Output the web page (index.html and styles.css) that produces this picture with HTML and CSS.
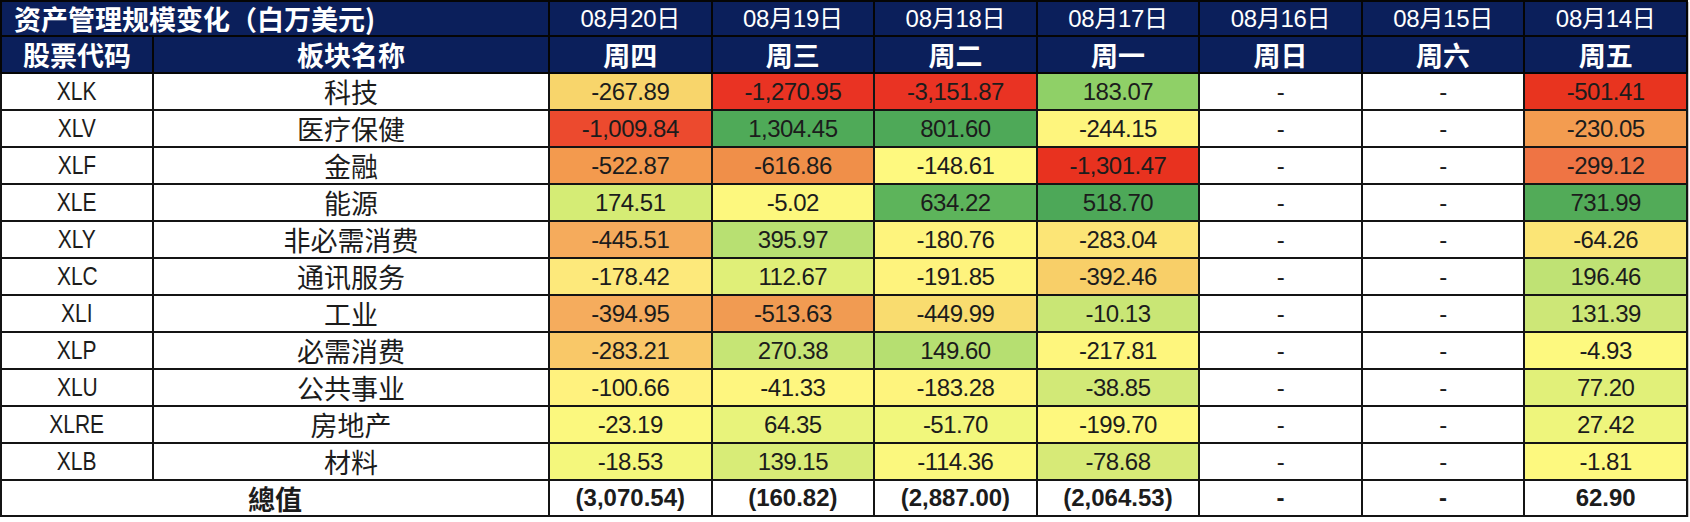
FILE: index.html
```html
<!DOCTYPE html>
<html lang="zh-CN">
<head>
<meta charset="utf-8">
<title>资产管理规模变化</title>
<link rel="stylesheet" href="styles.css">
</head>
<body>
<table class="aum">
  <colgroup>
    <col class="c-ticker">
    <col class="c-name">
    <col class="c-day"><col class="c-day"><col class="c-day"><col class="c-day"><col class="c-day"><col class="c-day"><col class="c-day">
  </colgroup>
  <thead>
    <tr class="r-title">
      <th class="title" colspan="2">资产管理规模变化（白万美元)</th>
      <th class="date">08月20日</th>
      <th class="date">08月19日</th>
      <th class="date">08月18日</th>
      <th class="date">08月17日</th>
      <th class="date">08月16日</th>
      <th class="date">08月15日</th>
      <th class="date">08月14日</th>
    </tr>
    <tr class="r-head">
      <th class="cn">股票代码</th>
      <th class="cn">板块名称</th>
      <th class="cn">周四</th>
      <th class="cn">周三</th>
      <th class="cn">周二</th>
      <th class="cn">周一</th>
      <th class="cn">周日</th>
      <th class="cn">周六</th>
      <th class="cn">周五</th>
    </tr>
  </thead>
  <tbody>
    <tr>
      <td class="tk"><span class="narrow">XLK</span></td><td class="nm">科技</td>
      <td class="num" style="background:#f8d56b">-267.89</td>
      <td class="num" style="background:#e93323">-1,270.95</td>
      <td class="num" style="background:#e93323">-3,151.87</td>
      <td class="num" style="background:#8fd067">183.07</td>
      <td class="num">-</td><td class="num">-</td>
      <td class="num" style="background:#e8341f">-501.41</td>
    </tr>
    <tr>
      <td class="tk"><span class="narrow">XLV</span></td><td class="nm">医疗保健</td>
      <td class="num" style="background:#ec4a2e">-1,009.84</td>
      <td class="num" style="background:#4faa58">1,304.45</td>
      <td class="num" style="background:#4ea958">801.60</td>
      <td class="num" style="background:#fef57d">-244.15</td>
      <td class="num">-</td><td class="num">-</td>
      <td class="num" style="background:#f39c50">-230.05</td>
    </tr>
    <tr>
      <td class="tk"><span class="narrow">XLF</span></td><td class="nm">金融</td>
      <td class="num" style="background:#f39a4e">-522.87</td>
      <td class="num" style="background:#f08f49">-616.86</td>
      <td class="num" style="background:#fef97f">-148.61</td>
      <td class="num" style="background:#e8321f">-1,301.47</td>
      <td class="num">-</td><td class="num">-</td>
      <td class="num" style="background:#ef7444">-299.12</td>
    </tr>
    <tr>
      <td class="tk"><span class="narrow">XLE</span></td><td class="nm">能源</td>
      <td class="num" style="background:#d5ec75">174.51</td>
      <td class="num" style="background:#fdf87e">-5.02</td>
      <td class="num" style="background:#5db45b">634.22</td>
      <td class="num" style="background:#4da858">518.70</td>
      <td class="num">-</td><td class="num">-</td>
      <td class="num" style="background:#52ab58">731.99</td>
    </tr>
    <tr>
      <td class="tk"><span class="narrow">XLY</span></td><td class="nm">非必需消费</td>
      <td class="num" style="background:#f5ab5c">-445.51</td>
      <td class="num" style="background:#b8e072">395.97</td>
      <td class="num" style="background:#fef47d">-180.76</td>
      <td class="num" style="background:#fce576">-283.04</td>
      <td class="num">-</td><td class="num">-</td>
      <td class="num" style="background:#fbe576">-64.26</td>
    </tr>
    <tr>
      <td class="tk"><span class="narrow">XLC</span></td><td class="nm">通讯服务</td>
      <td class="num" style="background:#fde97b">-178.42</td>
      <td class="num" style="background:#e0ef78">112.67</td>
      <td class="num" style="background:#fef37d">-191.85</td>
      <td class="num" style="background:#f8cf68">-392.46</td>
      <td class="num">-</td><td class="num">-</td>
      <td class="num" style="background:#bfe274">196.46</td>
    </tr>
    <tr>
      <td class="tk"><span class="narrow">XLI</span></td><td class="nm">工业</td>
      <td class="num" style="background:#f5ac5d">-394.95</td>
      <td class="num" style="background:#f19b52">-513.63</td>
      <td class="num" style="background:#f9dc6f">-449.99</td>
      <td class="num" style="background:#c9e675">-10.13</td>
      <td class="num">-</td><td class="num">-</td>
      <td class="num" style="background:#cde777">131.39</td>
    </tr>
    <tr>
      <td class="tk"><span class="narrow">XLP</span></td><td class="nm">必需消费</td>
      <td class="num" style="background:#f9c868">-283.21</td>
      <td class="num" style="background:#c6e575">270.38</td>
      <td class="num" style="background:#b6df71">149.60</td>
      <td class="num" style="background:#fef67d">-217.81</td>
      <td class="num">-</td><td class="num">-</td>
      <td class="num" style="background:#fdf97f">-4.93</td>
    </tr>
    <tr>
      <td class="tk"><span class="narrow">XLU</span></td><td class="nm">公共事业</td>
      <td class="num" style="background:#fff27e">-100.66</td>
      <td class="num" style="background:#fef67f">-41.33</td>
      <td class="num" style="background:#fef47d">-183.28</td>
      <td class="num" style="background:#d2e977">-38.85</td>
      <td class="num">-</td><td class="num">-</td>
      <td class="num" style="background:#e1f079">77.20</td>
    </tr>
    <tr>
      <td class="tk"><span class="narrow">XLRE</span></td><td class="nm">房地产</td>
      <td class="num" style="background:#fbf87e">-23.19</td>
      <td class="num" style="background:#e8f37b">64.35</td>
      <td class="num" style="background:#f1f77c">-51.70</td>
      <td class="num" style="background:#fef87e">-199.70</td>
      <td class="num">-</td><td class="num">-</td>
      <td class="num" style="background:#eef57c">27.42</td>
    </tr>
    <tr>
      <td class="tk"><span class="narrow">XLB</span></td><td class="nm">材料</td>
      <td class="num" style="background:#f4f77c">-18.53</td>
      <td class="num" style="background:#d8ec77">139.15</td>
      <td class="num" style="background:#fbf87e">-114.36</td>
      <td class="num" style="background:#d7ea77">-78.68</td>
      <td class="num">-</td><td class="num">-</td>
      <td class="num" style="background:#fdf97f">-1.81</td>
    </tr>
  </tbody>
  <tfoot>
    <tr class="r-total">
      <td class="total-label" colspan="2">總值</td>
      <td class="tot">(3,070.54)</td>
      <td class="tot">(160.82)</td>
      <td class="tot">(2,887.00)</td>
      <td class="tot">(2,064.53)</td>
      <td class="tot">-</td>
      <td class="tot">-</td>
      <td class="tot">62.90</td>
    </tr>
  </tfoot>
</table>
</body>
</html>
```

FILE: styles.css
```css
html, body {
  margin: 0;
  padding: 0;
  background: #ffffff;
}

.aum {
  border-collapse: collapse;
  table-layout: fixed;
  width: 1686px;
  font-family: "Liberation Sans", "Noto Sans CJK SC", sans-serif;
  color: #1c1c1c;
  box-shadow: 1px 2px 0 #c9c9c9;
}

.c-ticker { width: 152px; }
.c-name { width: 396px; }
.c-day { width: 162.57px; }

.aum th,
.aum td {
  border: 2px solid #141414;
  padding: 0;
  text-align: center;
  vertical-align: middle;
  white-space: nowrap;
  line-height: 1;
}

.aum thead th {
  background: #0b1f5b;
  color: #ffffff;
  border-color: #050505;
}

.r-title { height: 35px; }
.r-head { height: 37px; }
.aum tbody tr { height: 37px; }
.r-total { height: 36px; }

.title {
  text-align: left !important;
  padding-left: 12px !important;
  font-family: "Noto Sans CJK SC", sans-serif;
  font-size: 27px;
  font-weight: 700;
}

.date {
  font-size: 24px;
  font-weight: 400;
  letter-spacing: -0.3px;
}

.cn {
  font-family: "Noto Sans CJK SC", sans-serif;
  font-size: 27px;
  font-weight: 700;
}

.tk {
  font-family: "Liberation Sans", sans-serif;
  font-size: 25px;
  background: #ffffff;
}

.narrow {
  display: inline-block;
  transform: scaleX(0.84);
}

.nm {
  font-family: "Noto Sans CJK SC", sans-serif;
  font-size: 27px;
  background: #ffffff;
}

.num {
  font-size: 24px;
  letter-spacing: -0.5px;
  background: #ffffff;
}

.total-label {
  font-family: "Noto Sans CJK SC", sans-serif;
  font-size: 27px;
  font-weight: 700;
  background: #ffffff;
}

.tot {
  font-size: 24px;
  font-weight: 700;
  background: #ffffff;
}
```
